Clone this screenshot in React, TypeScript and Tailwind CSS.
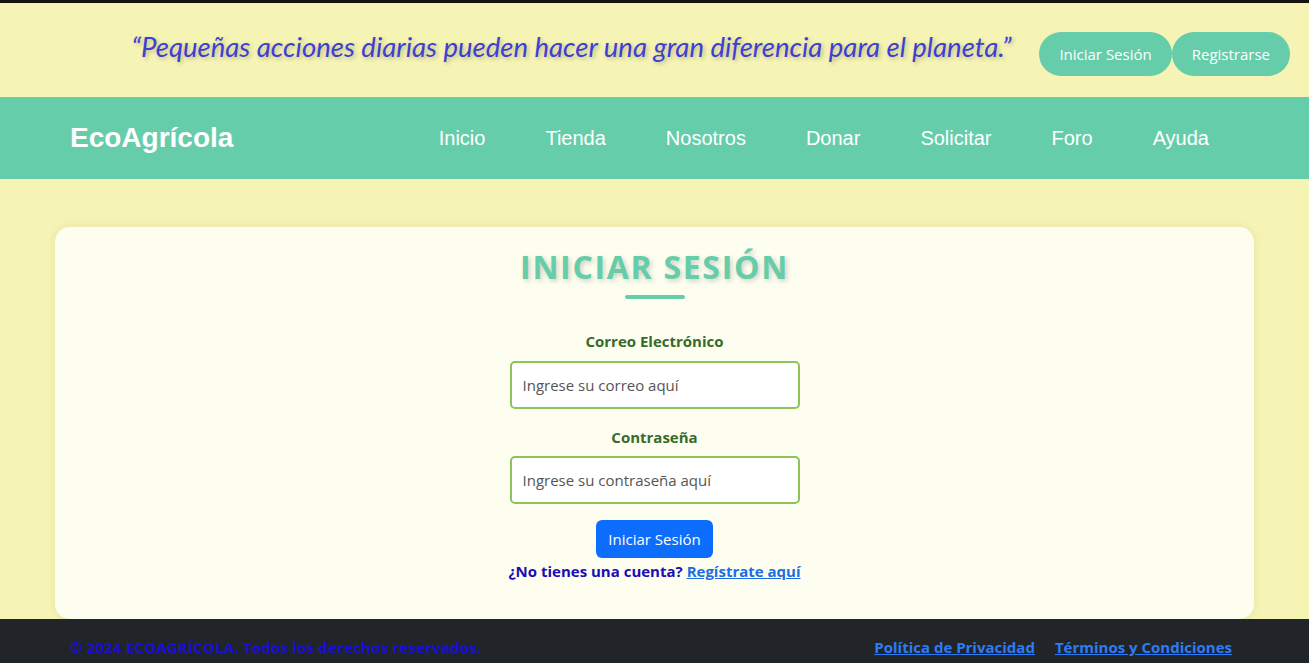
import React from 'react';

const navLinks = ['Inicio', 'Tienda', 'Nosotros', 'Donar', 'Solicitar', 'Foro', 'Ayuda'];

export default function App() {
  return (
    <div className="w-[1309px] h-[663px] overflow-hidden flex flex-col bg-[#F6F4B4] border-t-[3px] border-[#151510]">
      {/* Quote band */}
      <div className="h-[94px] shrink-0 flex items-center justify-end pr-[19px]">
        <p className="font-['Lato',sans-serif] italic text-[27.5px] text-[#3E3FD2] [text-shadow:2px_2px_4px_rgba(0,0,0,0.25)] mr-[28px] mb-[6px]">
          “Pequeñas acciones diarias pueden hacer una gran diferencia para el planeta.”
        </p>
        <div className="flex items-center mt-[8px]">
          <button className="h-[44px] px-[20px] rounded-full bg-[#66CDAA] text-white text-[15px] font-['Open_Sans',sans-serif]">
            Iniciar Sesión
          </button>
          <button className="h-[44px] px-[20px] rounded-full bg-[#66CDAA] text-white text-[15px] font-['Open_Sans',sans-serif]">
            Registrarse
          </button>
        </div>
      </div>

      {/* Nav */}
      <nav className="h-[82px] shrink-0 bg-[#66CDAA] flex items-center justify-between px-[70px] font-['Liberation_Sans',Arial,sans-serif] text-white">
        <span className="text-[28px] font-bold">EcoAgrícola</span>
        <ul className="flex items-center">
          {navLinks.map((l) => (
            <li key={l} className="px-[30px] text-[20px]">{l}</li>
          ))}
        </ul>
      </nav>

      {/* Main */}
      <main className="flex-1 flex flex-col pt-[48px] px-[55px]">
        <section className="flex-1 bg-[#FEFEF0] rounded-[15px] shadow-[0_0_10px_rgba(0,0,0,0.08)] flex flex-col items-center pt-[20px] font-['Open_Sans',sans-serif]">
          <h1 className="text-[32px] font-bold text-[#66CDAA] tracking-[1.7px] leading-[40px] [text-shadow:2px_2px_5px_rgba(0,0,0,0.2)]">
            INICIAR SESIÓN
          </h1>
          <div className="w-[60px] h-[4px] rounded-full bg-[#66CDAA] mt-[8px]" />

          <label className="mt-[31px] text-[15px] font-bold text-[#376B2B]">Correo Electrónico</label>
          <input
            type="email"
            placeholder="Ingrese su correo aquí"
            className="mt-[8px] w-[290px] h-[48px] rounded-[5px] border-2 border-[#8DC35A] bg-white px-[11px] text-[15px] placeholder:text-[#555]"
          />

          <label className="mt-[17px] text-[15px] font-bold text-[#376B2B]">Contraseña</label>
          <input
            type="password"
            placeholder="Ingrese su contraseña aquí"
            className="mt-[8px] w-[290px] h-[48px] rounded-[5px] border-2 border-[#8DC35A] bg-white px-[11px] text-[15px] placeholder:text-[#555]"
          />

          <button className="mt-[16px] h-[38px] px-[12px] rounded-[6px] bg-[#0D6EFD] text-white text-[15px]">
            Iniciar Sesión
          </button>
          <p className="mt-[2px] text-[15px] font-bold text-[#1B0DB5]">
            ¿No tienes una cuenta?{' '}
            <a className="text-[#1A6DE3] underline">Regístrate aquí</a>
          </p>
        </section>
      </main>

      {/* Footer */}
      <footer className="h-[44px] shrink-0 bg-[#212529] flex items-start justify-between px-[70px] pt-[17px] font-['Open_Sans',sans-serif] text-[15px] font-bold">
        <span className="text-[#1A0DD6] tracking-[0.2px]">© 2024 ECOAGRÍCOLA. Todos los derechos reservados.</span>
        <div className="flex gap-[20px] mr-[7px]">
          <a className="text-[#2D7CF6] underline">Política de Privacidad</a>
          <a className="text-[#2D7CF6] underline">Términos y Condiciones</a>
        </div>
      </footer>
    </div>
  );
}
